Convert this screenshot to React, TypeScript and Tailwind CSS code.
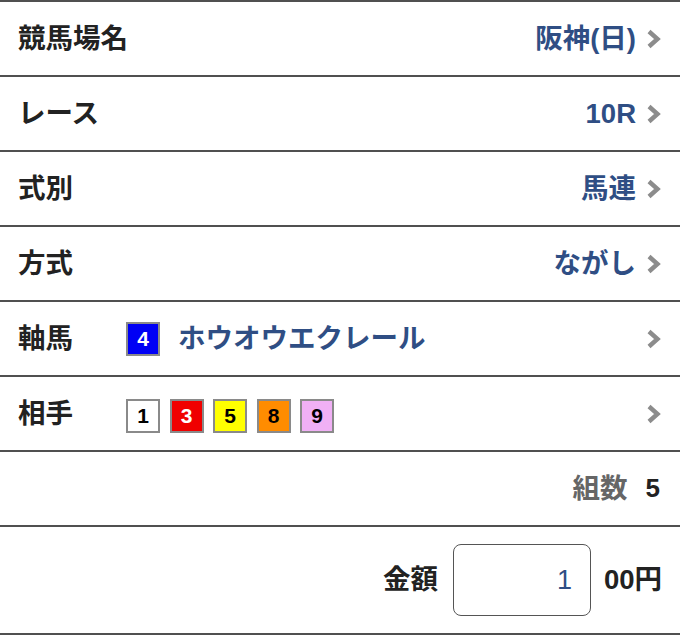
import React from 'react';

const font = { fontFamily: '"Liberation Sans", "Noto Sans CJK JP", sans-serif' };

function Chevron() {
  return (
    <svg width="16" height="22" viewBox="0 0 16 22" className="shrink-0">
      <path d="M3 3.5 L11.5 11 L3 18.5" fill="none" stroke="#8c8c8c" strokeWidth="4.4" strokeLinecap="butt" strokeLinejoin="miter" />
    </svg>
  );
}

function Waku({ n, bg, fg }: { n: string; bg: string; fg: string }) {
  return (
    <span
      className={`w-[34px] h-[34px] border-2 border-[#8a8a8a] flex items-center justify-center text-[21px] font-bold ${bg} ${fg}`}
    >
      {n}
    </span>
  );
}

function Row({ label, value }: { label: string; value: string }) {
  return (
    <div className="flex items-center justify-between h-[75px] border-t-2 border-[#505050] pl-[18px] pr-[18px]">
      <span className="text-[27.5px] font-bold text-[#222]">{label}</span>
      <div className="flex items-center gap-[10px]">
        <span className="text-[27.5px] font-bold text-[#2f4e84]">{value}</span>
        <Chevron />
      </div>
    </div>
  );
}

export default function App() {
  return (
    <div className="w-[680px] h-[641px] bg-white" style={font}>
      <Row label="競馬場名" value="阪神(日)" />
      <Row label="レース" value="10R" />
      <Row label="式別" value="馬連" />
      <Row label="方式" value="ながし" />

      {/* 軸馬 */}
      <div className="flex items-center h-[75px] border-t-2 border-[#505050] pl-[18px] pr-[18px]">
        <span className="w-[108px] text-[27.5px] font-bold text-[#222]">軸馬</span>
        <Waku n="4" bg="bg-[#0000f5]" fg="text-white" />
        <span className="ml-[18px] text-[27.5px] font-bold text-[#2f4e84]">ホウオウエクレール</span>
        <div className="ml-auto">
          <Chevron />
        </div>
      </div>

      {/* 相手 */}
      <div className="flex items-center h-[75px] border-t-2 border-[#505050] pl-[18px] pr-[18px]">
        <span className="w-[108px] text-[27.5px] font-bold text-[#222]">相手</span>
        <div className="flex items-center gap-[9.5px] mt-[4px]">
          <Waku n="1" bg="bg-white" fg="text-black" />
          <Waku n="3" bg="bg-[#f00000]" fg="text-white" />
          <Waku n="5" bg="bg-[#ffff00]" fg="text-black" />
          <Waku n="8" bg="bg-[#ff8c00]" fg="text-black" />
          <Waku n="9" bg="bg-[#f0b0f5]" fg="text-black" />
        </div>
        <div className="ml-auto">
          <Chevron />
        </div>
      </div>

      {/* 組数 */}
      <div className="flex items-center justify-end gap-[18px] h-[75px] border-t-2 border-[#505050] pr-[20px]">
        <span className="text-[27.5px] font-bold text-[#666]">組数</span>
        <span className="text-[26px] font-bold text-[#222]">5</span>
      </div>

      {/* 金額 */}
      <div className="flex items-center justify-end h-[110px] border-t-2 border-b-2 border-[#505050] pr-[18px]">
        <span className="text-[27.5px] font-bold text-[#222]">金額</span>
        <div className="ml-[15px] w-[138px] h-[72px] border-[1.5px] border-[#555] rounded-[8px] flex items-center justify-end pr-[18px]">
          <span className="text-[27px] text-[#2f4e84]">1</span>
        </div>
        <span className="ml-[13px] text-[27.5px] font-bold text-[#222]">00円</span>
      </div>
    </div>
  );
}
